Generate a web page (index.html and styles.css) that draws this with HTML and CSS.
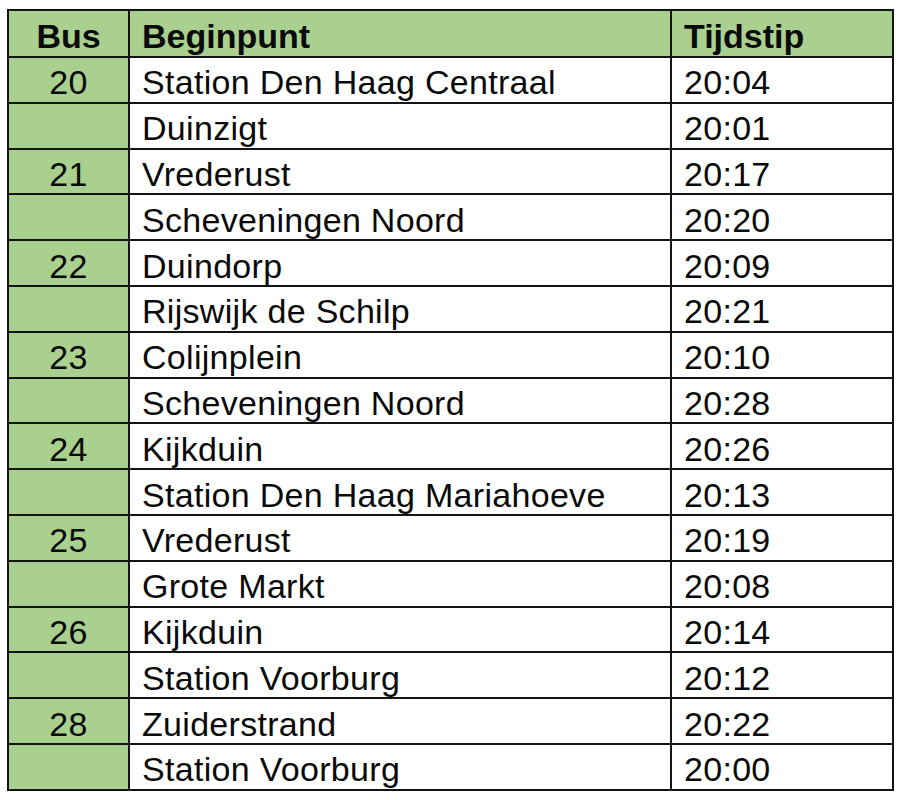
FILE: index.html
```html
<!DOCTYPE html>
<html lang="nl">
<head>
<meta charset="utf-8">
<title>Bussen</title>
<link rel="stylesheet" href="styles.css">
</head>
<body>
<div class="page">
<table class="schedule">
  <colgroup>
    <col class="c-bus">
    <col class="c-start">
    <col class="c-time">
  </colgroup>
  <thead>
    <tr class="head"><th class="bus">Bus</th><th>Beginpunt</th><th>Tijdstip</th></tr>
  </thead>
  <tbody>
    <tr><td class="bus">20</td><td>Station Den Haag Centraal</td><td>20:04</td></tr>
    <tr><td class="bus"></td><td>Duinzigt</td><td>20:01</td></tr>
    <tr><td class="bus">21</td><td>Vrederust</td><td>20:17</td></tr>
    <tr><td class="bus"></td><td>Scheveningen Noord</td><td>20:20</td></tr>
    <tr><td class="bus">22</td><td>Duindorp</td><td>20:09</td></tr>
    <tr><td class="bus"></td><td>Rijswijk de Schilp</td><td>20:21</td></tr>
    <tr><td class="bus">23</td><td>Colijnplein</td><td>20:10</td></tr>
    <tr><td class="bus"></td><td>Scheveningen Noord</td><td>20:28</td></tr>
    <tr><td class="bus">24</td><td>Kijkduin</td><td>20:26</td></tr>
    <tr><td class="bus"></td><td>Station Den Haag Mariahoeve</td><td>20:13</td></tr>
    <tr><td class="bus">25</td><td>Vrederust</td><td>20:19</td></tr>
    <tr><td class="bus"></td><td>Grote Markt</td><td>20:08</td></tr>
    <tr><td class="bus">26</td><td>Kijkduin</td><td>20:14</td></tr>
    <tr><td class="bus"></td><td>Station Voorburg</td><td>20:12</td></tr>
    <tr><td class="bus">28</td><td>Zuiderstrand</td><td>20:22</td></tr>
    <tr><td class="bus"></td><td>Station Voorburg</td><td>20:00</td></tr>
  </tbody>
</table>
</div>
</body>
</html>
```
FILE: styles.css
```css
html, body {
  margin: 0;
  padding: 0;
  background: #ffffff;
}

.page {
  padding: 9px 0 0 7px;
}

.schedule {
  table-layout: fixed;
  border-collapse: separate;
  border-spacing: 0;
  width: 887px;
  border-top: 2px solid #141414;
  border-left: 2px solid #141414;
  font-family: "Liberation Sans", Arial, sans-serif;
  font-size: 34px;
  letter-spacing: 0.3px;
  color: #0a0a0a;
}

.c-bus { width: 121px; }
.c-start { width: 542px; }
.c-time { width: 222px; }

.schedule th,
.schedule td {
  box-sizing: border-box;
  height: 45.8px;
  padding: 5px 12px 0 12px;
  border-right: 2px solid #141414;
  border-bottom: 2px solid #141414;
  text-align: left;
  vertical-align: middle;
  line-height: 38px;
  white-space: nowrap;
  overflow: hidden;
}

.schedule th {
  height: 47px;
  font-weight: bold;
  letter-spacing: 0;
  background: #a9d08e;
}

.schedule .bus {
  text-align: center;
  background: #a9d08e;
  padding-left: 0;
  padding-right: 0;
}
```
